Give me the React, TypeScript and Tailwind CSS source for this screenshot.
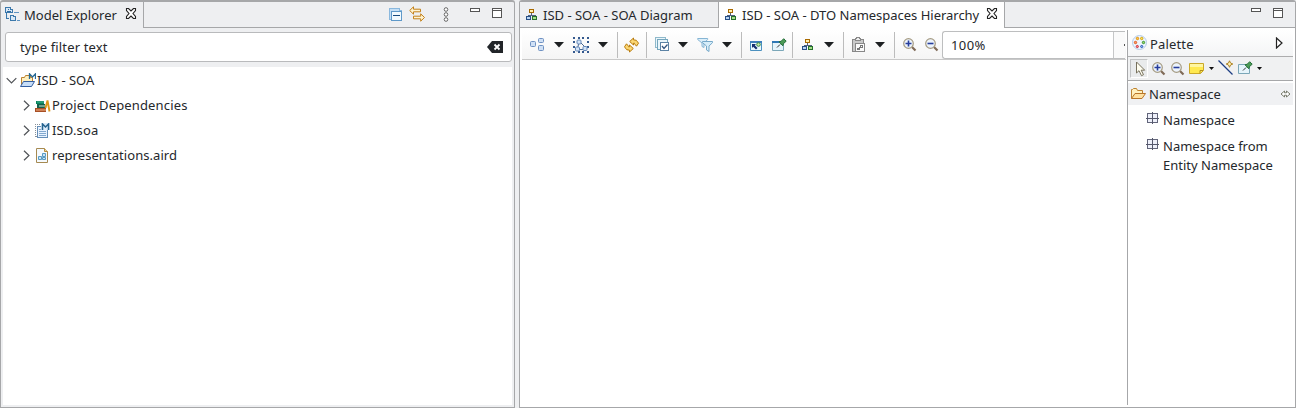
import React from "react";

type P = { c?: string };

function Svg({ c = "", w = 16, h = 16, crisp = true, children }: { c?: string; w?: number; h?: number; crisp?: boolean; children: React.ReactNode }) {
  return (
    <svg className={`shrink-0 ${c}`} width={w} height={h} viewBox={`0 0 ${w} ${h}`} fill="none" shapeRendering={crisp ? "crispEdges" : "auto"}>
      {children}
    </svg>
  );
}

const Explorer = ({ c }: P) => (
  <Svg c={c}>
    <path d="M.5.5h5v2h2v3h-7zM1.500 6v5.500H4M5.500 8.500h3v1h2v4h-5z" fill="#d9e8f6" stroke="#3b78ab" />
    <path d="M2 4h4v1H2zM3 2h1v1H3z" fill="#2f6ca3" />
    <path d="M9 5.500h5M12 13.500h3" stroke="#5e93c1" />
  </Svg>
);
const Close = ({ c }: P) => (
  <Svg c={c} w={12} h={11} crisp={false}>
    <path d="M1.500.5h2L6 3 8.500.5h2v2L8 5.500l2.500 3v2h-2L6 8l-2.500 2.500h-2v-2l2.500-3-2.500-3z" stroke="#222" strokeWidth="1.100" fill="#fff" />
  </Svg>
);
const Collapse = ({ c }: P) => (
  <Svg c={c}>
    <path d="M1.500 12.500v-11h10v2h2v10h-10v-1z" fill="#c5dff5" stroke="#8ab8de" />
    <path d="M3.500 4.500h10v9h-10z" fill="#f2fafe" stroke="#5f99c9" />
    <path d="M5 8.500h7" stroke="#174b80" />
  </Svg>
);
const Link = ({ c }: P) => (
  <Svg c={c} crisp={false}>
    <path d="M.7 4.500 4.500.8v2.400h7v2.600h-7v2.400zM15.500 11.500l-3.800-3.700v2.400H4.500v2.600h7.200v2.400z" fill="#fff3cf" stroke="#c38019" />
  </Svg>
);
const Dots = ({ c }: P) => (
  <Svg c={c} w={6} h={16} crisp={false}>
    {[2.5, 7.5, 12.5].map((y) => <circle key={y} cx="3" cy={y} r="1.800" stroke="#666" fill="#fff" />)}
  </Svg>
);
const Min = ({ c }: P) => <Svg c={c} w={10} h={10}><path d="M.5.5h9v3h-9z" fill="#fff" stroke="#555" /></Svg>;
const Max = ({ c }: P) => <Svg c={c} w={10} h={10}><path d="M.5.5h9v9h-9zM0 2.500h10" fill="#fff" stroke="#555" /></Svg>;
const Clear = ({ c }: P) => (
  <Svg c={c} w={16} h={12} crisp={false}>
    <path d="M0 6 5 0h11v12H5z" fill="#222529" />
    <path d="m7.500 3.500 5 5m0-5-5 5" stroke="#fff" strokeWidth="1.800" />
  </Svg>
);
const Hierarchy = ({ c }: P) => (
  <Svg c={c} w={12} h={12}>
    <path d="M5.500 4v3M2.500 8V6.500h7V8" stroke="#52627d" />
    <path d="M3.500.5h4v3h-4z" fill="#fff0ae" stroke="#a96a00" />
    <path d="M.5 7.500h4v3h-4z" fill="#b9d4f2" stroke="#284f86" />
    <path d="M6.500 7.500h4v3h-4z" fill="#a6dd87" stroke="#26712b" />
  </Svg>
);
const Blocks = ({ c }: P) => (
  <Svg c={c} crisp={false}>
    <g stroke="#6f91c2" fill="#cfe0f5">
      <rect x=".5" y="4.500" width="5" height="5" rx="1" />
      <rect x="8.500" y="1.500" width="5" height="4" rx="1" />
      <rect x="8.500" y="8.500" width="5" height="5" rx="1" />
    </g>
  </Svg>
);
const SelectAll = ({ c }: P) => (
  <Svg c={c} w={17} h={17} crisp={false}>
    <path d="M6 6 4.500 11M7 5l5 5M7 12.500h4" stroke="#47668f" />
    <path d="M0 1h2M5 1h2M9 1h2M14 1h2M0 15h2M5 15h2M9 15h2M14 15h2M0 5h2M0 10h2M14 5h2M14 10h2" stroke="#34598e" strokeWidth="2" shapeRendering="crispEdges" />
    <g stroke="#6588b9" fill="#d3e4f7">
      <rect x="4" y="3" width="4" height="4" rx="1" /><rect x="2.500" y="10" width="4" height="4" rx="1" /><rect x="10" y="9.500" width="4" height="4" rx="1" />
    </g>
  </Svg>
);
const Refresh = ({ c }: P) => (
  <Svg c={c} crisp={false}>
    <path d="M5.700 4.500 9.500 1v1.800q3.500 0 4 2l1 1.400-2 3-2-2.400v-.6h-1V8z" fill="#fbd773" stroke="#b87a0c" />
    <path d="M9.300 11.500 5.500 15v-1.800q-3.500 0-4-2l-1-1.400 2-3 2 2.400v.6h1V8z" fill="#fbd773" stroke="#b87a0c" />
  </Svg>
);
const Layers = ({ c }: P) => (
  <Svg c={c}>
    <path d="M.5.5h10v10H.5z" fill="#eaf6fb" stroke="#8fb9cb" /><path d="M2.500 2.500h10v10h-10z" fill="#eaf6fb" stroke="#75a6bd" />
    <path d="M5.500 5.500h8v8h-8z" fill="#fff" stroke="#5c83a5" />
    <path d="m7 9 2 2.500L12.500 7.500" stroke="#345780" strokeWidth="1.300" shapeRendering="auto" />
  </Svg>
);
const Filter = ({ c }: P) => (
  <Svg c={c} crisp={false}>
    <path d="M.7 1.500h10v1L7 6v4.500l-2-1V6L.7 2.500z" fill="#dceffa" stroke="#86b5d4" />
    <path d="M5.500 4.500h10v1.200L12 9v5.500l-2.500-1.500V9l-4-3.300z" fill="#d6edf9" stroke="#77a9c9" />
  </Svg>
);
const WindowSync = ({ c }: P) => (
  <Svg c={c} w={14} h={14} crisp={false}>
    <path d="M1.500 3.500h11v9h-11z" fill="#eaf8ff" stroke="#4c91bf" /><path d="M1 3h12v2H1z" fill="#3f80bd" />
    <path d="M3 6h4L5.800 7.200 8.500 10 7 11.500 4.200 8.800 3 10z" fill="#152f70" />
    <circle cx="9.500" cy="6.500" r="1.800" fill="#c9eda6" stroke="#398746" />
  </Svg>
);
const Pin = ({ c, plain = false }: P & { plain?: boolean }) => (
  <Svg c={c} crisp={false}>
    <path d="M.5 4.500h11v9H.5z" fill="#e5f4fb" stroke="#7ba7b8" />
    {!plain && <path d="M0 5h9" stroke="#2e77b5" strokeWidth="2" />}
    <path d="m5 10.500 3-3" stroke="#333" />
    <path d="m7 4.800 3.800 4 .7-2.200 2.700-2.400-2.500-2.500-2.500 2.500z" fill="#4c9b56" stroke="#246e39" />
  </Svg>
);
const Paste = ({ c }: P) => (
  <Svg c={c}>
    <path d="M.5 2.500h11v12H.5z" fill="#c9c9c9" stroke="#888" /><path d="M3.500 3.500v-2h1v-1h3v1h1v2z" fill="#eee" stroke="#888" />
    <path d="M3.500 6.500h9v8h-9z" fill="#fafafa" stroke="#888" /><path d="M8.500 8.500h2v2h-2zM5.500 11.500h2v1h-2zM7 10.500h2" stroke="#777" />
  </Svg>
);
const Zoom = ({ c, plus = false }: P & { plus?: boolean }) => (
  <Svg c={c} w={14} h={14} crisp={false}>
    <path d="m9 9 3.500 3.500" stroke="#806b58" strokeWidth="2.200" />
    <circle cx="5.500" cy="5.500" r="4.800" fill="#edf4fc" stroke="#a59b82" strokeWidth="1.200" />
    <path d={plus ? "M2.500 5.500h6M5.500 2.500v6" : "M2.500 5.500h6"} stroke="#263d9c" strokeWidth="1.600" />
  </Svg>
);
const Down = ({ c }: P) => <Svg c={c} w={10} h={6} crisp={false}><path d="M0 0h10L5 5.500z" fill="#1d2022" /></Svg>;
const SmallDown = ({ c }: P) => <Svg c={c} w={5} h={3} crisp={false}><path d="M0 0h5L2.500 3z" fill="#111" /></Svg>;
const Sep = ({ c = "" }: P) => <span className={`h-[26px] w-px shrink-0 bg-[#bcbcbc] ${c}`} />;
const PaletteIcon = ({ c }: P) => (
  <Svg c={c} crisp={false}>
    <circle cx="7.500" cy="7.500" r="7" fill="#eef5fd" stroke="#b4cbe8" />
    <circle cx="5.500" cy="3.500" r="1.200" fill="#ffd33d" stroke="#e28a10" /><circle cx="9.700" cy="3.500" r="1.200" fill="#ffe65a" stroke="#d4a30e" />
    <circle cx="3.500" cy="7.500" r="1.200" fill="#ff9c60" stroke="#df5d25" /><circle cx="11.500" cy="7.500" r="1.200" fill="#9bd66b" stroke="#33932f" />
    <circle cx="5.300" cy="11.500" r="1.100" fill="#ff8b8b" stroke="#cd2d3c" /><circle cx="9.700" cy="11.500" r="1.100" fill="#91b7fa" stroke="#2757b5" />
  </Svg>
);
const Cursor = ({ c }: P) => (
  <Svg c={c} w={11} h={16} crisp={false}><path d="M1.500 1v11l2.500-2.300 2.500 5 2-1-2.300-4.500h3.500z" fill="#fffef0" stroke="#77715d" /></Svg>
);
const Note = ({ c }: P) => (
  <Svg c={c} w={15} h={11} crisp={false}><path d="M.5.5h14v7l-3 3H.5z" fill="#ffe950" stroke="#cba92a" /><path d="M1 1h13v3H1z" fill="#fff6a0" /><path d="M14 7.500h-3v3" stroke="#b08d20" /></Svg>
);
const Connection = ({ c }: P) => (
  <Svg c={c} crisp={false}><path d="m.5.5 14 14" stroke="#1c3d83" strokeWidth="1.300" /><path d="m11.500.8 1 2.200 2.300 1-2.300 1-1 2.300-1-2.300-2.300-1 2.300-1z" fill="#fff2b5" stroke="#ae8325" /></Svg>
);
const Folder = ({ c, blue = false }: P & { blue?: boolean }) => (
  <Svg c={c} crisp={false}>
    <path d={blue ? "M1.500 12.500v-8h3l1-2h5v2h2v5" : "M.5 12.500v-9h1l1-1h3l1 2h5v3"} fill="#fff0be" stroke="#bd822f" />
    <path d={blue ? "M.5 13.500 3.500 8.500h11l-3 5z" : "m.5 12.500 3.500-5h10.500l-3.500 5z"} fill={blue ? "#c6ddf8" : "#ffe1a0"} stroke={blue ? "#345ea0" : "#b87529"} />
    {blue && <path d="M9.500 6V.8L12.500 4l3-3.200V6" stroke="#286994" strokeWidth="1.300" />}
  </Svg>
);
const Books = ({ c }: P) => (
  <Svg c={c} crisp={false}>
    <path d="M1 3h8v3H1z" fill="#07845d" /><path d="M2 4h7" stroke="#4aaf90" /><path d="M2 6h8v4H2z" fill="#155f4c" /><path d="M4 8h6" stroke="#cfe6cf" />
    <path d="M0 10h11v4H0z" fill="#a84f25" /><path d="M1 12h10" stroke="#f4b386" /><path d="m10.500 10 2-7.500 2 11" stroke="#dd9618" strokeWidth="1.900" />
  </Svg>
);
const Model = ({ c }: P) => (
  <Svg c={c}>
    <path d="M.5 1v13M2 1.500h5M1 13.500h10" stroke="#87919a" strokeDasharray="1 1" /><path d="M2.500 3.500h10v11h-10z" fill="#e9f3ff" stroke="#668eb7" />
    <path d="M4 6.500h3M4 8.500h7M4 10.500h7M4 12.500h7" stroke="#83a9cf" /><path d="M6 0h9v7H6z" fill="#dcebfa" /><path d="M7.500 7V1l3 3 3-3v6" stroke="#25638e" strokeWidth="1.500" shapeRendering="auto" />
  </Svg>
);
const Aird = ({ c }: P) => (
  <Svg c={c} crisp={false}>
    <path d="M1.500.5h8l3 3v11h-11z" fill="#f5fafe" stroke="#a68a52" /><path d="M9.500.5v3h3" fill="#eed69b" stroke="#b78d3d" />
    <path d="M3.500 8.500h3v3h-3zM7.500 5.500h3v3h-3zM7.500 9.500h3v2h-3z" fill="#cce5f6" stroke="#579ac3" />
  </Svg>
);
const Namespace = ({ c }: P) => <Svg c={c} w={13} h={13}><path d="M1.500 1.500h10v9h-10z" fill="#eef0fa" stroke="#62657a" /><path d="M6.500 0v12M0 6.500h13" stroke="#55586c" /></Svg>;
const Chevron = ({ c, open = false }: P & { open?: boolean }) => (
  <Svg c={c} w={11} h={11} crisp={false}><path d={open ? "M.7 3.200 5.500 8l4.800-4.800" : "M3 .7 8 5.500l-5 4.800"} stroke="#505357" strokeWidth="1.200" /></Svg>
);

const rows = [
  { name: "Project Dependencies", icon: <Books />, text: "tracking-[0.15px]" },
  { name: "ISD.soa", icon: <Model />, text: "tracking-[0.15px]" },
  { name: "representations.aird", icon: <Aird />, text: "tracking-[0.06px]" },
];

export default function App() {
  return (
    <div className="flex h-[408px] w-[1296px] overflow-hidden bg-[#eeeff1] font-['Noto_Sans',sans-serif] text-[13px] leading-[19px] text-[#25282c]">
      <section className="flex w-[515px] shrink-0 flex-col rounded-t-[3px] border border-t-2 border-[#a6a7a9]">
        <header className="flex h-[26px] shrink-0">
          <div className="flex w-[143px] items-start border-r border-[#a6a7a9] pl-1">
            <Explorer c="mt-[5px]" />
            <span className="ml-[3px] mt-[4px] w-[93px] whitespace-nowrap">Model Explorer</span>
            <Close c="ml-[8px] mt-[6px]" />
          </div>
          <div className="flex flex-1 border-b border-[#a6a7a9]">
            <Collapse c="ml-[244px] mt-[5px]" />
            <Link c="ml-[5px] mt-[4px]" />
            <Dots c="ml-[18px] mt-[5px]" />
            <Min c="ml-[21px] mt-[6px]" />
            <Max c="ml-[12px] mt-[6px]" />
          </div>
        </header>
        <div className="flex flex-1 flex-col px-[2px] pt-[4px] pb-[2px]">
          <div className="ml-[2px] flex h-[30px] w-[507px] shrink-0 items-center rounded-[3px] border border-[#b9babc] bg-white pl-[14px] pr-[8px]">
            <span className="flex-1 tracking-[0.14px]">type filter text</span>
            <Clear />
          </div>
          <div className="mt-[5px] flex-1 bg-white pt-px">
            <div className="flex h-[25px] items-center pl-[3px]">
              <Chevron open /><Folder blue c="ml-[3px]" /><span className="ml-px">ISD - SOA</span>
            </div>
            {rows.map((r) => (
              <div key={r.name} className="flex h-[25px] items-center pl-[18px]">
                <Chevron /><span className="ml-[3px]">{r.icon}</span><span className={`ml-px ${r.text}`}>{r.name}</span>
              </div>
            ))}
          </div>
        </div>
      </section>

      <section className="ml-[4px] flex w-[777px] shrink-0 flex-col rounded-t-[3px] border border-t-2 border-[#a6a7a9] bg-white">
        <header className="flex h-[26px] shrink-0 bg-[#eeeff1]">
          <div className="flex w-[199px] items-start border-r border-b border-[#a6a7a9] pl-[6px]">
            <Hierarchy c="mt-[7px]" /><span className="ml-[5px] mt-[4px] whitespace-nowrap">ISD - SOA - SOA Diagram</span>
          </div>
          <div className="flex w-[286px] items-start border-r border-[#a6a7a9] bg-white pl-[6px]">
            <Hierarchy c="mt-[7px]" /><span className="ml-[5px] mt-[4px] w-[238px] whitespace-nowrap tracking-[-0.02px]">ISD - SOA - DTO Namespaces Hierarchy</span>
            <Close c="ml-[6px] mt-[6px]" />
          </div>
          <div className="flex flex-1 justify-end border-b border-[#a6a7a9] pr-[12px] pt-[6px]"><Min /><Max c="ml-[12px]" /></div>
        </header>
        <div className="flex flex-1 px-[2px] pt-[2px] pb-[2px]">
          <main className="w-[604px] shrink-0">
            <div className="flex h-[30px] items-center border-b border-[#c9c9c9] bg-gradient-to-b from-white to-[#f5f5f5] pt-px pl-[8px]">
              <Blocks /><Down c="ml-[8px]" />
              <SelectAll c="ml-[9px]" /><Down c="ml-[8px]" />
              <Sep c="ml-[9px]" /><Refresh c="ml-[6px]" /><Sep c="ml-[6px]" />
              <Layers c="ml-[8px]" /><Down c="ml-[7px]" />
              <Filter c="ml-[9px]" /><Down c="ml-[9px]" />
              <Sep c="ml-[9px]" /><WindowSync c="ml-[7px]" /><Pin c="ml-[9px]" /><Sep c="ml-[4px]" />
              <Hierarchy c="ml-[9px]" /><Down c="ml-[10px]" />
              <Sep c="ml-[9px]" /><Paste c="ml-[8px]" /><Down c="ml-[7px]" />
              <Sep c="ml-[9px]" /><Zoom plus c="ml-[8px]" /><Zoom c="ml-[8px]" />
              <div className="ml-[3px] flex h-[28px] w-[183px] shrink-0 items-center rounded-l-[3px] border border-r-0 border-[#bdbebf] bg-white pl-[8px]">
                <span className="flex-1 tracking-[0.4px]">100%</span>
                <span className="flex h-[26px] w-[12px] items-center justify-end border-l border-[#c6c7c8] bg-[#fafafa]"><i className="h-[2px] w-px bg-[#555]" /></span>
              </div>
            </div>
          </main>
          <aside className="ml-px flex flex-1 flex-col border-l border-[#a6a7a9]">
            <div className="flex h-[27px] shrink-0 items-center border-b border-[#adadae] bg-gradient-to-b from-white to-[#f4f5f6] pl-[4px]">
              <PaletteIcon /><span className="ml-[2px] flex-1 pt-[2px] tracking-[0.15px]">Palette</span>
              <Svg w={8} h={12} crisp={false} c="mr-[10px]"><path d="M1.500 1v10L7 6z" fill="#fff" stroke="#222" strokeWidth="1.200" /></Svg>
            </div>
            <div className="flex h-[24px] shrink-0 items-center border-b border-[#a6a7a9] bg-[#f0f1f2]">
              <span className="ml-[2px] flex h-[19px] w-[18px] shrink-0 items-center border border-r-white border-b-white border-[#c1c3c4] bg-[#e9ebec] pl-[4px]"><Cursor /></span>
              <Zoom plus c="ml-[4px]" /><Zoom c="ml-[5px]" /><Note c="ml-[4px]" /><SmallDown c="ml-[5px]" />
              <Connection c="ml-[4px] -mt-px" /><Pin plain c="ml-[4px] -mt-px" /><SmallDown c="ml-[3px]" />
            </div>
            <div className="mt-[2px] flex h-[22px] shrink-0 items-center bg-[#f0f1f3] pl-[3px]">
              <Folder /><span className="ml-[2px] flex-1">Namespace</span>
              <Svg w={11} h={8} crisp={false} c="mr-[2px]"><path d="M4.500 1 1 4l3.500 3V5.200h2V7L10 4 6.500 1v1.800h-2z" fill="#fff" stroke="#6b6e5e" strokeWidth=".9" /></Svg>
            </div>
            <div className="flex flex-col gap-[7px] pl-[18px] pt-[6px]">
              <div className="flex items-start"><Namespace c="mt-[1px]" /><span className="ml-[4px]">Namespace</span></div>
              <div className="flex items-start"><Namespace c="mt-[1px]" /><span className="ml-[4px]">Namespace from<br />Entity Namespace</span></div>
            </div>
          </aside>
        </div>
      </section>
    </div>
  );
}
